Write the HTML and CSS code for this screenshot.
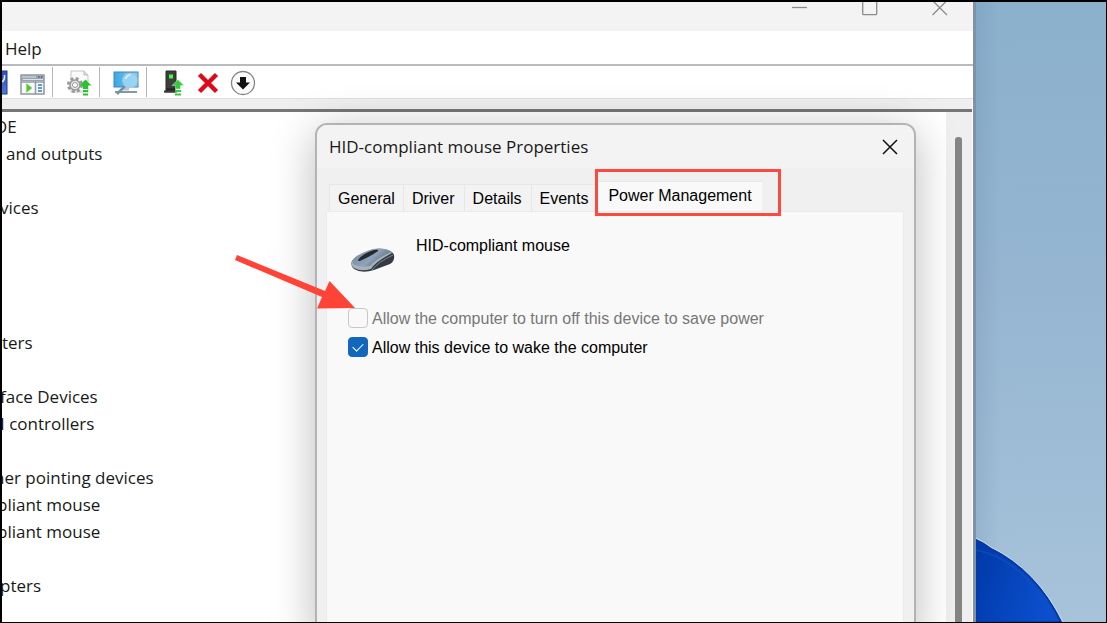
FILE: index.html
```html
<!DOCTYPE html>
<html lang="en">
<head>
<meta charset="utf-8">
<title>HID-compliant mouse Properties</title>
<link rel="stylesheet" href="styles.css">
</head>
<body>
<div class="screen">
  <main class="window">
    <header class="titlebar">
      <button class="caption" aria-label="Minimize"><svg width="16" height="16" viewBox="0 0 16 16"><path d="M0 7.500h15"/></svg></button>
      <button class="caption" aria-label="Maximize"><svg width="16" height="16" viewBox="0 0 16 16"><rect x=".7" y=".7" width="14" height="14" rx="1"/></svg></button>
      <button class="caption" aria-label="Close"><svg width="16" height="16" viewBox="0 0 16 16"><path d="M.5 .5l14.500 14.500M15 .5L.5 15"/></svg></button>
    </header>
    <nav class="menubar"><button class="menu">Help</button></nav>
    <div class="toolbar">
      <button class="tool tool-cut" aria-label="Help topics">
        <svg width="6" height="26" viewBox="0 0 6 26"><defs><linearGradient id="hb" x2="0" y2="1"><stop stop-color="#2f50b8"/><stop offset="1" stop-color="#4d77df"/></linearGradient></defs><rect x="-4" y="1" width="9" height="23" fill="url(#hb)" stroke="#233f96"/><path d="M0 12q3-2 2.500-7" fill="none" stroke="#e3ebff" stroke-width="1.500"/></svg>
      </button>
      <button class="tool" aria-label="Show action pane">
        <svg width="26" height="26" viewBox="0 0 26 26"><rect x="1" y="5" width="23" height="19" fill="#f7f9fa" stroke="#8e979f" stroke-width="1.500"/><path d="M1 5h23v6H1z" fill="#98a4af"/><path d="M2 7h14M3 9.500h20" stroke="#dce2e7"/><path d="M18 7h1.500M21 7h1.500" stroke="#53606c" stroke-width="1.500"/><path d="M1 12h23M15.500 11v13" stroke="#929ca5" stroke-width="1.500"/><path d="M6.500 13.500v9l5.500-4.500z" fill="#56c42d" stroke="#87d966" stroke-width=".5"/><path d="M18 15h4M18 18h4M18 21h4" stroke="#3979b8" stroke-width="1.500"/></svg>
      </button>
      <span class="divider"></span>
      <button class="tool" aria-label="Update driver">
        <svg width="26" height="26" viewBox="0 0 26 26"><path d="M5 1h13l4 4v17H5z" fill="#fafafa" stroke="#c5c5c5"/><path d="M18 1v4h4" fill="#ddd" stroke="#bbb"/><g fill="none" stroke="#999" ><circle cx="9" cy="15" r="6.500" stroke-width="3" stroke-dasharray="2.800 2.300"/><circle cx="9" cy="15" r="5" fill="#e8e8e8" stroke-width="1.500"/><circle cx="9" cy="15" r="2.500" fill="#fff"/></g><path d="M19.500 9.500l6 6H22v3.500h-5v-3.500h-3.500z" fill="#26c42d"/><path d="M17 21h5M17 24.500h5" stroke="#26c42d" stroke-width="2"/></svg>
      </button>
      <span class="divider"></span>
      <button class="tool" aria-label="Scan for hardware changes">
        <svg width="26" height="26" viewBox="0 0 26 26"><defs><linearGradient id="mo"><stop stop-color="#3da5e3"/><stop offset="1" stop-color="#83d0fa"/></linearGradient></defs><rect x="1" y="2" width="24" height="15" fill="url(#mo)" stroke="#3489c2"/><path d="M10 17.500h6v3h-6z" fill="#b7c7d2"/><path d="M2 22h22" stroke="#8499a8" stroke-width="2"/><path d="M12 16L4 24" stroke="#6d93ad" stroke-width="2.500"/><circle cx="17" cy="10.500" r="7" fill="#9cdafb" fill-opacity=".8" stroke="#b3c9d6" stroke-width="1.500"/><path d="M12.500 9q1.500-4 5-4" fill="none" stroke="#dcf4ff" stroke-width="1.500"/></svg>
      </button>
      <span class="divider"></span>
      <button class="tool" aria-label="Enable device">
        <svg width="26" height="26" viewBox="0 0 26 26"><path d="M6 1h10v18H6z" fill="#3d3d3d" stroke="#292929"/><path d="M6 18.500h9v4H4.500z" fill="#252525"/><path d="M4 21.500h13" stroke="#3c3c3c" stroke-width="2"/><path d="M9 4.500h4v4H9z" fill="#41ff37"/><path d="M18 9.500l6 6h-3.500v3.500h-5v-3.500H12z" fill="#34ca3b" stroke="#fff" stroke-width=".4"/><path d="M15 21h6M15 24.500h6" stroke="#34ca3b" stroke-width="2"/></svg>
      </button>
      <button class="tool" aria-label="Uninstall device">
        <svg width="26" height="26" viewBox="0 0 26 26"><path d="M4.500 4.500L21.500 21.500M21.500 4.500L4.500 21.500" stroke="#e00718" stroke-width="4.500"/></svg>
      </button>
      <button class="tool" aria-label="Disable device">
        <svg width="26" height="26" viewBox="0 0 26 26"><circle cx="13" cy="13" r="11.500" fill="#fbfbfb" stroke="#858585" stroke-width="1.300"/><path d="M10 7h6v5.500h4L13 19.500 6 12.500h4z" fill="#111"/></svg>
      </button>
    </div>
    <div class="strip"></div>
    <div class="content">
      <ul class="tree">
        <li class="cut-half">OE</li>
        <li class="child">and outputs</li>
        <li></li>
        <li class="cut">vices</li>
        <li></li><li></li><li></li><li></li>
        <li>ters</li>
        <li></li>
        <li class="cut">face Devices</li>
        <li class="cut">I controllers</li>
        <li></li>
        <li class="cut-half">her pointing devices</li>
        <li class="cut-part">pliant mouse</li>
        <li class="cut-part">pliant mouse</li>
        <li></li>
        <li class="cut">pters</li>
      </ul>
      <div class="scrollbar"><div class="thumb"></div></div>
    </div>
  </main>
  <aside class="desktop">
    <svg class="bloom" width="90" height="85" viewBox="0 0 90 85"><defs><linearGradient id="bl" x2="1" y2=".3"><stop stop-color="#0039a8"/><stop offset="1" stop-color="#0b4fce"/></linearGradient></defs><path d="M0 3Q8 6 15 12Q60 33 85 85H0z" fill="url(#bl)" stroke="#0639a5" stroke-width="2"/><path d="M0 13Q51 23 78 85" fill="none" stroke="#1552be" stroke-width="2" opacity=".5"/><path d="M0 1Q8 5 15 10Q61 33 87 85" fill="none" stroke="#c0dbed" stroke-width="1"/></svg>
  </aside>

  <section class="dialog" role="dialog" aria-labelledby="dialog-title">
    <header class="dialog-title">
      <h1 id="dialog-title">HID-compliant mouse Properties</h1>
      <button class="close" aria-label="Close"><svg width="16" height="16" viewBox="0 0 16 16"><path d="M1 1l14 14M15 1L1 15"/></svg></button>
    </header>
    <div class="dialog-body">
      <div class="tabs" role="tablist">
        <button class="tab" role="tab">General</button>
        <button class="tab" role="tab">Driver</button>
        <button class="tab" role="tab">Details</button>
        <button class="tab" role="tab">Events</button>
        <button class="tab tab-active" role="tab" aria-selected="true">Power Management</button>
      </div>
      <div class="panel" role="tabpanel">
        <div class="device">
          <svg width="46" height="28" viewBox="0 0 46 28"><defs><linearGradient id="ms" x2="1" y2=".5"><stop stop-color="#6f839a"/><stop offset=".6" stop-color="#8fa3ba"/><stop offset="1" stop-color="#57687b"/></linearGradient></defs><path d="M2 15Q0 20 4 23Q12 28 24 24L40 18Q45 15 44 9Q43 6 38 4Q28 1 18 5Q6 9 2 15z" fill="#343b42"/><path d="M2 15Q0 20 4 22Q11 26 21 23Q25 16 42 7Q40 4 35 3Q26 1 17 5Q5 10 2 15z" fill="#a9b2ba"/><path d="M3 14Q1 17 5 19Q12 22 20 20Q26 13 41 6Q37 3 31 3Q24 2 16 6Q6 10 3 14z" fill="url(#ms)"/><path d="M8 14Q12 8 24 4Q29 3 28 5Q21 10 12 14Q8 16 8 14z" fill="#23292f"/><path d="M22 24Q28 16 43 9" fill="none" stroke="#798591"/></svg>
          <span>HID-compliant mouse</span>
        </div>
        <label class="option option-off"><input type="checkbox" disabled><span>Allow the computer to turn off this device to save power</span></label>
        <label class="option"><input type="checkbox" checked><span>Allow this device to wake the computer</span></label>
      </div>
    </div>
  </section>

  <div class="highlight"></div>
  <svg class="arrow" width="122" height="56" viewBox="0 0 122 56"><path d="M3 1L91 37L95.500 27L121 54L83 54.500L88 43L1 6z" fill="#ff4336"/></svg>
</div>
</body>
</html>
```
FILE: styles.css
```css
* { box-sizing: border-box; }

body {
  margin: 0;
  font-family: "Open Sans", "Noto Sans", sans-serif;
  font-size: 17px;
  color: #191919;
}

button {
  margin: 0;
  padding: 0;
  border: 0;
  background: none;
  color: inherit;
  font: inherit;
}

svg { display: block; }

.screen {
  position: relative;
  display: flex;
  height: 100vh;
  overflow: hidden;
  border: solid #000;
  border-width: 2px 1px 1px 2px;
}

.window {
  flex: 1;
  min-width: 0;
  display: flex;
  flex-direction: column;
  background: #fff;
  border-right: 3px solid #7e94a5;
}

.titlebar {
  display: flex;
  justify-content: flex-end;
  gap: 54px;
  height: 29px;
  padding-right: 25px;
  background: #f3f3f3;
}

.caption {
  width: 16px;
  height: 14px;
  display: flex;
  align-items: flex-end;
  overflow: hidden;
}

.caption svg {
  flex: none;
  fill: none;
  stroke: #8b8b8b;
  stroke-width: 1.3;
}

.menubar {
  height: 35px;
  padding-left: 3px;
  border-bottom: 2px solid #b9bbbe;
}

.menu {
  height: 35px;
  font-size: 17px;
}

.toolbar {
  display: flex;
  align-items: center;
  height: 33px;
  border-bottom: 1px solid #dedede;
}

.tool {
  margin: 0 4px 0 5px;
  padding: 2px 0 0;
}

.tool-cut { margin: 0 8px 0 0; }

.tool-cut + .tool { margin: 0 3px 0 4px; }

.divider {
  width: 1px;
  height: 30px;
  margin: 0 8px 0 3px;
  background: #b5b5b5;
}

.strip {
  height: 13px;
  background: #efefef;
  border-bottom: 3px solid #767676;
  margin-right: 1px;
}

.content {
  flex: 1;
  min-height: 0;
  display: flex;
  margin-right: 1px;
}

.tree {
  flex: 1;
  margin: 0;
  padding: 1px 0 0;
  list-style: none;
  overflow: hidden;
  line-height: 27px;
}

.tree li { height: 27px; }
.child { padding-left: 4px; }
.cut { margin-left: -2px; }
.cut-part { margin-left: -5px; }
.cut-half { margin-left: -8px; }

.scrollbar {
  width: 26px;
  padding: 25px 10px 0 9px;
  background: #efefef;
}

.thumb {
  height: 100%;
  border-radius: 3px 3px 0 0;
  background: #858585;
}

.desktop {
  width: 130px;
  display: flex;
  align-items: flex-end;
  background: linear-gradient(90deg, rgba(80, 110, 145, .15), transparent 24px), linear-gradient(#8bb1cd, #95b5d1 45%, #a7c3da);
}

.dialog {
  position: absolute;
  left: 313px;
  right: 190px;
  top: 121px;
  bottom: -20px;
  display: flex;
  flex-direction: column;
  overflow: hidden;
  border: 2px solid #b3b3b3;
  border-radius: 12px;
  background: #f0f0f0;
  box-shadow: 0 8px 44px rgba(0, 0, 0, .27);
}

.dialog-title {
  display: flex;
  align-items: center;
  justify-content: space-between;
  height: 43px;
  padding: 0 16px 0 12px;
  background: #f3f3f3;
}

.dialog-title h1 {
  margin: 0;
  font-size: 17px;
  font-weight: 400;
}

.close svg {
  fill: none;
  stroke: #111;
  stroke-width: 1.5;
}

.dialog-body {
  flex: 1;
  display: flex;
  flex-direction: column;
  padding: 13px 10px 0 9px;
  font-family: "Liberation Sans", Arial, sans-serif;
  font-size: 16px;
  color: #000;
}

.tabs {
  display: flex;
  align-items: flex-end;
  height: 30px;
  padding-left: 3px;
}

.tab {
  height: 27px;
  padding: 1px 8px 0;
  border: solid #e7e7e7;
  border-width: 1px 0 0 1px;
  background: #f3f3f3;
}

.tab + .tab { padding-right: 9px; }

.tab.tab-active {
  height: 30px;
  padding: 0 10px 2px;
  background: #f9f9f9;
}

.panel {
  flex: 1;
  padding: 25px 21px;
  border: 1px solid #ebebeb;
  background: #f9f9f9;
}

.device {
  display: flex;
  gap: 20px;
  height: 71px;
  padding-left: 2px;
}

.device svg { margin-top: 9px; }

.option {
  display: flex;
  align-items: center;
  gap: 4px;
  height: 20px;
  margin-bottom: 9px;
}

.option span { padding-top: 1px; }

.option-off { color: #777; }

.option input {
  appearance: none;
  width: 20px;
  height: 20px;
  margin: 0;
  border: 1px solid #c8c8c8;
  border-radius: 4px;
}

.option input:checked {
  border-color: #1267bd;
  background: #1267bd;
  display: grid;
  place-items: center;
}

.option input:checked::before {
  content: "";
  width: 9px;
  height: 5px;
  margin-bottom: 2px;
  border: solid #fff;
  border-width: 0 0 1px 1px;
  transform: rotate(-45deg);
}

.highlight {
  position: absolute;
  left: 593px;
  top: 167px;
  width: 186px;
  height: 47px;
  border: 3px solid #fb4a3e;
}

.arrow {
  position: absolute;
  left: 232px;
  top: 252px;
}
```
